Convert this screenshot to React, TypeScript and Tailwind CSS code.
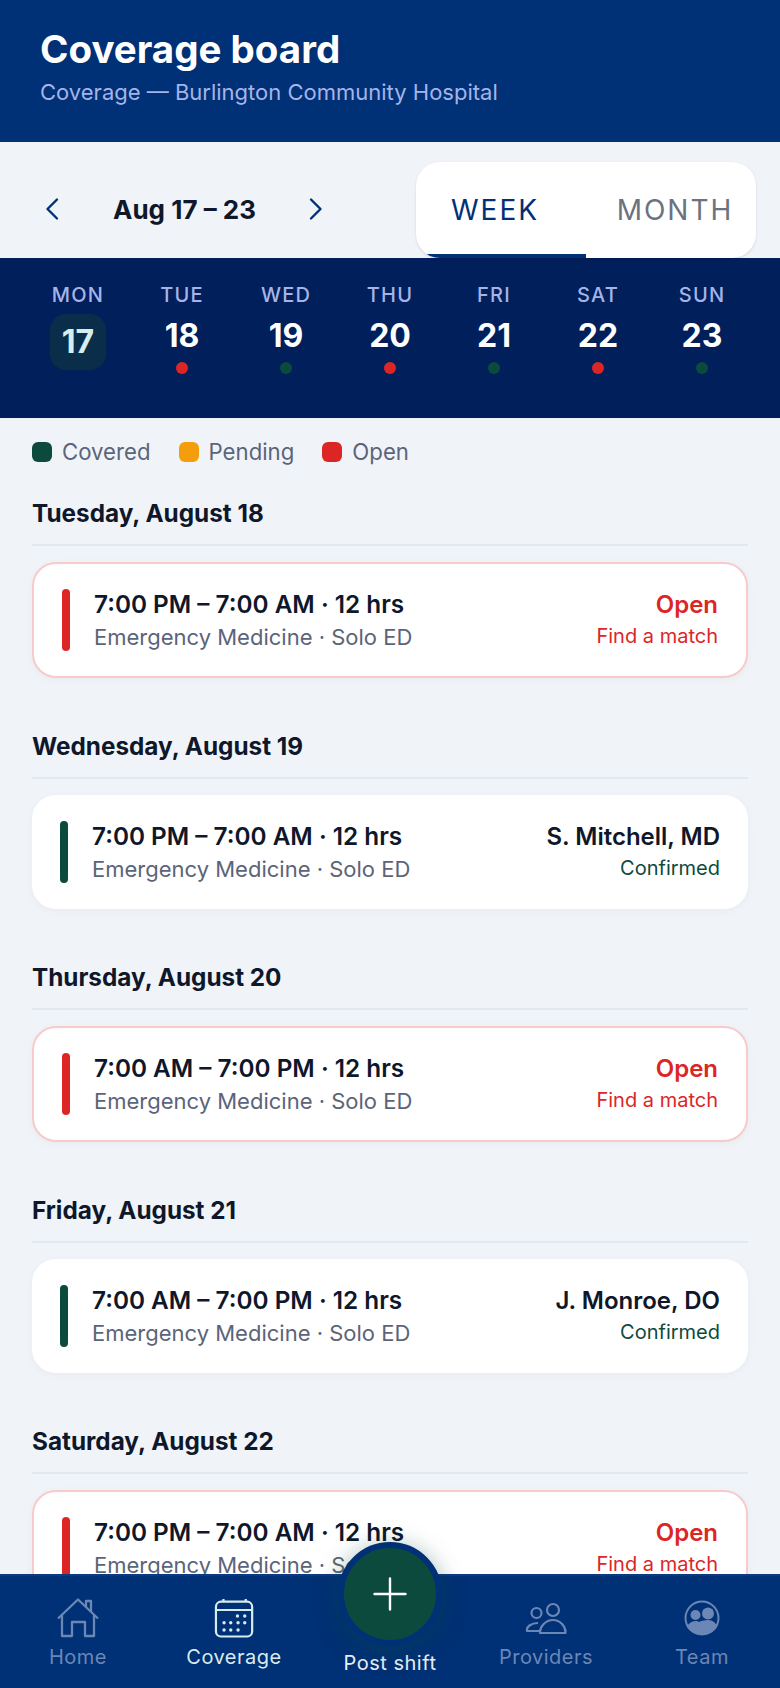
const days = [
    { name: 'MON', num: '17', status: 'today' },
    { name: 'TUE', num: '18', status: 'open' },
    { name: 'WED', num: '19', status: 'covered' },
    { name: 'THU', num: '20', status: 'open' },
    { name: 'FRI', num: '21', status: 'covered' },
    { name: 'SAT', num: '22', status: 'open' },
    { name: 'SUN', num: '23', status: 'covered' },
]

const shifts = [
    { day: 'Tuesday, August 18', time: '7:00 PM – 7:00 AM · 12 hrs', who: 'Open', note: 'Find a match', open: true },
    { day: 'Wednesday, August 19', time: '7:00 PM – 7:00 AM · 12 hrs', who: 'S. Mitchell, MD', note: 'Confirmed', open: false },
    { day: 'Thursday, August 20', time: '7:00 AM – 7:00 PM · 12 hrs', who: 'Open', note: 'Find a match', open: true },
    { day: 'Friday, August 21', time: '7:00 AM – 7:00 PM · 12 hrs', who: 'J. Monroe, DO', note: 'Confirmed', open: false },
    { day: 'Saturday, August 22', time: '7:00 PM – 7:00 AM · 12 hrs', who: 'Open', note: 'Find a match', open: true },
]

function Chevron({ dir }: { dir: 'left' | 'right' }) {
    return (
        <svg width="16" height="24" viewBox="0 0 16 24" fill="none" stroke="#003075" strokeWidth="2.4" strokeLinecap="round" strokeLinejoin="round">
            <path d={dir === 'left' ? 'M13 2.5 L3.5 12 L13 21.5' : 'M3 2.5 L12.5 12 L3 21.5'} />
        </svg>
    )
}

function HomeIcon() {
    return (
        <svg width="42" height="40" viewBox="0 0 42 40" fill="none" stroke="currentColor" strokeWidth="2.3" strokeLinejoin="round">
            <path d="M1 20.5 L21 1.5 L41 20.5" />
            <path d="M5 17 V38 H15 V24 H28 V38 H37 V17" />
            <path d="M29 9 V3 H34 V14" />
        </svg>
    )
}

function CalendarIcon() {
    const dots = [[22.7, 18], [30, 18], [9.3, 24.7], [16, 24.7], [23.3, 24.7], [30, 24.7], [9.3, 32], [16, 32], [23.3, 32]]
    return (
        <svg width="40" height="40" viewBox="0 0 38.5 40" fill="none" stroke="currentColor" strokeWidth="2.2">
            <rect x="1.2" y="3.7" width="36.2" height="34.8" rx="5" />
            <path d="M1.2 12 H37.4" />
            <path d="M8.7 1 V4 M31 1 V4" />
            {dots.map(([x, y]) => (
                <circle key={`${x}-${y}`} cx={x} cy={y} r="1.7" fill="currentColor" stroke="none" />
            ))}
        </svg>
    )
}

function ProvidersIcon() {
    return (
        <svg width="42" height="40" viewBox="0 0 42 40" fill="none" stroke="currentColor" strokeWidth="2.2" strokeLinejoin="round">
            <circle cx="11.5" cy="15" r="5" />
            <circle cx="28" cy="12" r="6" />
            <path d="M14 33 H2 C1 29 6 25 13 25" />
            <path d="M15 35 H40.5 C41 28.5 35 22 28 22 C21 22 14.5 28.5 15 35 Z" />
        </svg>
    )
}

function TeamIcon() {
    return (
        <svg width="36" height="40" viewBox="0 0 36 40">
            <circle cx="18" cy="20" r="16.5" fill="none" stroke="currentColor" strokeWidth="2" />
            <circle cx="11.5" cy="17" r="5" fill="currentColor" />
            <circle cx="24" cy="15.5" r="6" fill="currentColor" />
            <path d="M3 29 C5 24 9 23 13 23 L15 24 C17 23 20 22 24 22 C29 22 32 25 33 29 C30 34 24 37 18 37 C12 37 6 34 3 29 Z" fill="currentColor" />
        </svg>
    )
}

function NavItem({ label, active, children }: { label: string; active?: boolean; children: React.ReactNode }) {
    return (
        <div className={`flex flex-col items-center pt-[22px] ${active ? 'text-[#d8ecee]' : 'text-[#6b87b5]'}`}>
            <div className="h-10 flex items-center justify-center">{children}</div>
            <span className="mt-[5px] text-[20px] leading-[28px] tracking-[0.5px]">{label}</span>
        </div>
    )
}

export default function App() {
    return (
        <div className="relative flex flex-col h-[1688px] w-[780px] overflow-hidden bg-[#f0f4f9] font-['Inter',sans-serif]">
            {/* Header */}
            <header className="h-[142px] shrink-0 bg-[#003075] px-10 pt-[26px]">
                <h1 className="text-[38.5px] leading-[46px] font-bold text-white">Coverage board</h1>
                <p className="mt-[6px] text-[22px] leading-7 text-[#a5b4e8]">Coverage — Burlington Community Hospital</p>
            </header>

            {/* Week controls */}
            <div className="h-[116px] shrink-0 flex items-start justify-between pl-[44px] pr-6 pt-5">
                <div className="flex items-center h-[94px]">
                    <Chevron dir="left" />
                    <span className="ml-[53px] w-[195px] text-[26px] font-bold text-[#0f172a]">Aug 17 – 23</span>
                    <Chevron dir="right" />
                </div>
                <div className="relative flex w-[340px] h-[96px] rounded-[24px] bg-white overflow-hidden shadow-sm">
                    <div className="w-[170px] flex items-center justify-center pr-3 text-[#003075] text-[28px] tracking-[2px]">WEEK</div>
                    <div className="w-[170px] flex items-center justify-center pl-2 text-[#6b7280] text-[28px] tracking-[2px]">MONTH</div>
                    <span className="absolute left-0 bottom-0 w-[170px] h-[4px] bg-[#003075]" />
                </div>
            </div>

            {/* Day strip */}
            <div className="h-[160px] shrink-0 bg-[#001f5b] grid grid-cols-7 px-[26px] pt-[26px]">
                {days.map(d => (
                    <div key={d.name} className="flex flex-col items-center">
                        <span className="text-[20px] leading-[22px] font-medium tracking-[1.2px] text-[#a5b4e8]">{d.name}</span>
                        {d.status === 'today' ? (
                            <span className="mt-[8px] w-14 h-14 rounded-[16px] bg-[#0a2e4a] flex items-center justify-center text-[32px] font-bold text-[#d8ecee]">{d.num}</span>
                        ) : (
                            <>
                                <span className="mt-[10px] text-[32px] leading-[40px] font-bold text-white">{d.num}</span>
                                <span className={`mt-[6px] w-3 h-3 rounded-full ${d.status === 'open' ? 'bg-[#dc2626]' : 'bg-[#0d4a3e]'}`} />
                            </>
                        )}
                    </div>
                ))}
            </div>

            {/* Shift list */}
            <main className="flex-1 overflow-hidden px-8">
                <div className="flex items-center h-[68px] text-[22.2px] text-[#5b6478]">
                    <span className="w-5 h-5 rounded-[6px] bg-[#0d4a3e]" />
                    <span className="ml-[10px]">Covered</span>
                    <span className="ml-7 w-5 h-5 rounded-[6px] bg-[#f59e0b]" />
                    <span className="ml-[10px]">Pending</span>
                    <span className="ml-7 w-5 h-5 rounded-[6px] bg-[#dc2626]" />
                    <span className="ml-[10px]">Open</span>
                </div>
                {shifts.map(s => (
                    <section key={s.day} className="pt-[11px] pb-[41px]">
                        <h2 className="text-[24.3px] leading-8 font-bold text-[#0f172a] pb-[15px] border-b-2 border-[#e2e8f0]">{s.day}</h2>
                        <div className={`mt-[16px] flex items-center justify-between bg-white rounded-[24px] shadow-[0_2px_8px_rgba(0,0,0,0.04)] px-[28px] ${s.open ? 'h-[116px] border-2 border-[#f8caca]' : 'h-[114px]'}`}>
                            <div className="flex items-center">
                                <span className={`w-2 h-[62px] rounded-full ${s.open ? 'bg-[#dc2626]' : 'bg-[#0d4a3e]'}`} />
                                <div className="ml-6">
                                    <div className="text-[24.3px] leading-8 font-semibold text-[#0f172a]">{s.time}</div>
                                    <div className="mt-[1px] text-[22px] leading-[32px] text-[#5b6478]">Emergency Medicine · Solo ED</div>
                                </div>
                            </div>
                            <div className="text-right">
                                <div className={`text-[24px] leading-8 font-semibold ${s.open ? 'text-[#dc2626]' : 'text-[#0f172a]'}`}>{s.who}</div>
                                <div className={`text-[20px] leading-[30px] ${s.open ? 'text-[#dc2626]' : 'text-[#0d4a3e]'}`}>{s.note}</div>
                            </div>
                        </div>
                    </section>
                ))}
            </main>

            {/* Bottom nav */}
            <nav className="h-[114px] shrink-0 bg-[#003075] border-t-2 border-[#0a3a80] grid grid-cols-5">
                <NavItem label="Home"><HomeIcon /></NavItem>
                <NavItem label="Coverage" active><CalendarIcon /></NavItem>
                <div className="flex flex-col items-center justify-end pb-[11px] text-[#e8f0f5]">
                    <span className="text-[20px] leading-[28px] tracking-[0.5px]">Post shift</span>
                </div>
                <NavItem label="Providers"><ProvidersIcon /></NavItem>
                <NavItem label="Team"><TeamIcon /></NavItem>
            </nav>

            {/* Post shift FAB */}
            <button className="absolute left-[338px] top-[1542px] w-[104px] h-[104px] rounded-full bg-[#0d4a3e] border-[6px] border-[#003075] flex items-center justify-center shadow-[0_4px_24px_rgba(13,74,62,0.4)]">
                <svg width="34" height="34" viewBox="0 0 34 34" stroke="white" strokeWidth="2.4" strokeLinecap="round">
                    <path d="M17 1.5 V32.5 M1.5 17 H32.5" />
                </svg>
            </button>
        </div>
    )
}
